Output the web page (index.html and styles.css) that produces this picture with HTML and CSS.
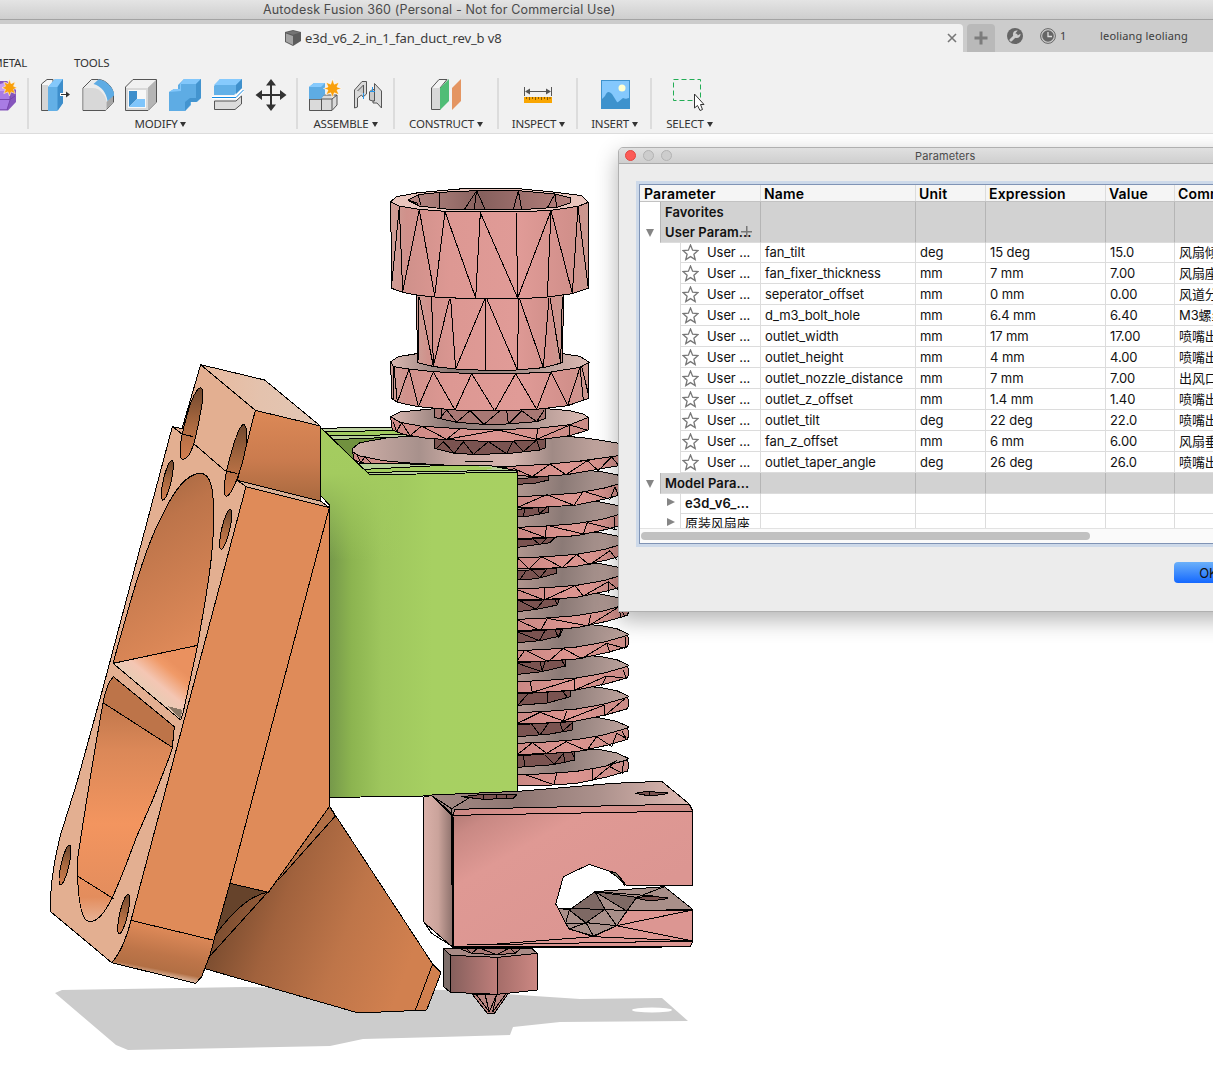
FILE: index.html
```
<!DOCTYPE html>
<html lang="en">
<head>
<meta charset="utf-8">
<title>Autodesk Fusion 360</title>
<link rel="stylesheet" href="styles.css">
</head>
<body>
<header class="titlebar"><span class="titlebar-text">Autodesk Fusion 360 (Personal - Not for Commercial Use)</span></header>

<nav class="tabstrip">
  <div class="tab">
    <svg class="cube" width="16" height="16" viewBox="0 0 16 16"><path d="M0 2 8 0l8 2v9l-8 5-8-4z" fill="#5c5c5c"/><path d="M1 3.500 8 6v9l-7-3.500z" fill="#a4a4a4"/><path d="M1 2.500 8 1l7 1.500-7 2.300z" fill="#747474"/></svg>
    <span class="tab-name">e3d_v6_2_in_1_fan_duct_rev_b v8</span>
    <svg class="tab-close" width="10" height="10" viewBox="0 0 10 10"><path d="M1 1 9 9M9 1 1 9" stroke="#777" stroke-width="1.600"/></svg>
  </div>
  <div class="newtab"><svg width="14" height="14" viewBox="0 0 14 14"><path d="M7 0.500V13.500M0.500 7H13.500" stroke="#7c7c7c" stroke-width="3"/></svg></div>
  <svg class="wrench" width="16" height="16" viewBox="0 0 16 16"><circle cx="8" cy="8" r="8" fill="#666"/><path d="M4 12 9 7" stroke="#ccc" stroke-width="3" stroke-linecap="round"/><path d="M10.800 2.600A3.800 3.800 0 1 0 13.500 5.800L11 7.300 8.900 7 8.600 5z" fill="#ccc"/></svg>
  <svg class="clock" width="16" height="16" viewBox="0 0 16 16"><circle cx="8" cy="8" r="7.400" fill="none" stroke="#666"/><circle cx="8" cy="8" r="5.800" fill="#666"/><path d="M8 4V8.500H12" fill="none" stroke="#ddd" stroke-width="1.300"/></svg>
  <span class="jobs">1</span>
  <span class="user">leoliang leoliang</span>
</nav>

<section class="ribbon">
  <div class="ribbon-tabs"><span class="rt-metal">METAL</span><span class="rt-tools">TOOLS</span></div>
  <div class="groups">
    <div class="group g-create">
      <div class="icons"><svg width="18" height="34" viewBox="0 78 18 34"><path d="M0 81H7L16 90V102L8 110.500H0z" fill="#8656bd"/><path d="M0 84 7 82 11 90 0 92z" fill="#c79df2"/><path d="M0 91H10V100L7 109H0z" fill="#a97ce4"/><path d="M0 99.500H10L15 96M10 91V100L7 110" stroke="#7745ad" fill="none"/><path d="M9.500 79.500l1.500 4.200 4.200-1.700-1.700 4.200 3.500 1.600-3.500 1.600 1.700 4.200-4.200-1.700-1.500 4.200-1.500-4.200-4.200 1.700 1.700-4.200-3.500-1.600 3.500-1.600-1.700-4.200 4.200 1.700z" fill="#f9a00c" stroke="#fff3dd" stroke-width=".6"/></svg></div>
    </div>
    <div class="group g-modify">
      <div class="icons">
        <svg width="32" height="34" viewBox="39 78 32 34"><path d="M41.500 84 47 79.500H53V110.500H41.500z" fill="#f5f5f5" stroke="#555"/><path d="M42 85H48V110H42z" fill="#d5d5d5"/><path d="M48 87 55 79H63V103L57 111H48z" fill="#63b0e6"/><path d="M48 87 55 79H63L57.500 87z" fill="#84c8fb"/><path d="M57.500 87 63 79V103L57.500 111z" fill="#3d8ecb"/><path d="M60 94.500H68" stroke="#fff" stroke-width="3"/><path d="M61 94.500H67" stroke="#333"/><path d="M66 91.500 70 94.500 66 97.500z" fill="#333"/></svg>
        <svg width="32" height="34" viewBox="82.500 78 32 34"><path d="M83.500 88 92 79.500H99C107 80 114 88 114 95V102L106 110.500H83.500z" fill="#ececec" stroke="#555"/><path d="M84 88H93C101 88 106 96 107 101V110H84z" fill="#d8d8d8"/><path d="M107 102 113.500 95V102L107 109z" fill="#a6a6a6"/><path d="M94 84 99 79.500C107 80 114 88 115 95L108 101C107 93 102 86 94 84z" fill="#5eace4"/></svg>
        <svg width="32" height="34" viewBox="126 78 32 34"><path d="M126.500 87 134 79.500H157.500V102L149 110.500H126.500z" fill="#f1f1f1" stroke="#555"/><path d="M149 87.500 157 80V102L149 110z" fill="#b5b5b5"/><path d="M127 88H149V110H127z" fill="#d9d9d9"/><path d="M129 90H147V108H129z" fill="#f8f8f8"/><path d="M130 91H138V99L130 107z" fill="#3d8ecb"/><path d="M130 107 138 99H146V107z" fill="#7fc5fb"/></svg>
        <svg width="32" height="34" viewBox="169 78 32 34"><path d="M169 92 174 89H178V85L184 79H201V98L197 102H191V105L185 111H169z" fill="#5eace4"/><path d="M169 92 174 89H180V84L184 79H201L196 84H181V91z" fill="#82c7fb"/><path d="M196 84 201 79V98L196 102H190V105L185 111V102L190 98H196z" fill="#4394cf"/></svg>
        <svg width="32" height="34" viewBox="212 78 32 34"><path d="M214 86 220 79H242V88L234 95H214z" fill="#62b0e7"/><path d="M214 85 220 79H242L236 85z" fill="#86cafd"/><path d="M236 85 242 79V88L236 94z" fill="#3f90cc"/><path d="M214.500 101H236L241.500 96V104L235 109.500H214.500z" fill="#dcdcdc" stroke="#555"/><path d="M212 97.500H236L243 90" fill="none" stroke="#fff" stroke-width="3.500"/><path d="M212 97.500H236L243.500 90" fill="none" stroke="#1689e0"/></svg>
        <svg width="32" height="34" viewBox="255 78 32 34"><path d="M271 82V108M259 95H284" stroke="#333" stroke-width="2"/><path d="M271 79l5 6.500H266zM271 111l5-6.500H266zM255.500 95l6.500-5V100zM286.500 95l-6.500-5V100z" fill="#333"/></svg>
      </div>
      <div class="label">MODIFY<i></i></div>
    </div>
    <div class="group g-assemble">
      <div class="icons">
        <svg width="34" height="34" viewBox="308 78 34 34"><path d="M309.500 99H321V97L324 95H337V105L332 110.500H309.500z" fill="#dadada" stroke="#555"/><path d="M309.500 99H332L337 95M321.500 99V110M332 99V110" fill="none" stroke="#555"/><path d="M309 87 314 83H325V94L321 99H309z" fill="#5eace4"/><path d="M309 87 314 83H325L321 87z" fill="#86cafd"/><path d="M332.500 79l1.800 5.200 4.700-2-2 4.700 4.500 1.600-4.500 1.600 2 4.700-4.700-2-1.800 4.700-1.800-4.700-4.700 2 2-4.700-4.500-1.600 4.500-1.600-2-4.700 4.700 2z" fill="#f9a00c" stroke="#fff" stroke-width=".6"/></svg>
        <svg width="32" height="34" viewBox="352 78 32 34"><path d="M354.500 90 362 81.500H366.500V94L363 97 361.500 95 357.500 98V107L354.500 108z" fill="#d9d9d9" stroke="#555"/><path d="M357.500 91 363.500 85V94M369.500 92 372 89.500H374.500V101.500L369.500 100z" fill="#c9c9c9" stroke="#555"/><path d="M374.500 83.500 381.500 91V108L377 103H373V101H374.500z" fill="#d9d9d9" stroke="#555"/><path d="M363.500 93V99M372.500 87V92M370 91.500H375" stroke="#2694e8"/></svg>
      </div>
      <div class="label">ASSEMBLE<i></i></div>
    </div>
    <div class="group g-construct">
      <div class="icons"><svg width="32" height="34" viewBox="431 78 32 34"><path d="M432.500 88 440 79.500H448L441 88V109.500H432.500z" fill="#f4f4f4" stroke="#555"/><path d="M433 88H441V109H433z" fill="#d8d8d8"/><path d="M441 88 450 79V101L441 110z" fill="#50bd76"/><path d="M453 88 462 79V101L453 110z" fill="#e49562"/></svg></div>
      <div class="label">CONSTRUCT<i></i></div>
    </div>
    <div class="group g-inspect">
      <div class="icons"><svg width="32" height="34" viewBox="522 78 32 34"><path d="M524.500 87V96M551.500 87V96M527 91.500H549" stroke="#555" fill="none"/><path d="M525 91.500 530 88.500V94.500zM551 91.500 546 88.500V94.500z" fill="#555"/><path d="M524 97H552V103H524z" fill="#f9a602"/><path d="M526.500 97V99M529.500 97V100M532.500 97V99M535.500 97V100M538.500 97V99M541.500 97V100M544.500 97V99M547.500 97V100M550 97V99" stroke="#8b5c00"/></svg></div>
      <div class="label">INSPECT<i></i></div>
    </div>
    <div class="group g-insert">
      <div class="icons"><svg width="32" height="34" viewBox="598 78 32 34"><path d="M600 80H629V109H600z" fill="#3e92cd"/><path d="M601 81H628V98C625 99 624 99 622 98C619 100 617 103 616 102L611 94C608 91 606 91 604 96L601 99z" fill="#84c8fd"/><circle cx="621" cy="88" r="3.500" fill="#ffffd2"/></svg></div>
      <div class="label">INSERT<i></i></div>
    </div>
    <div class="group g-select">
      <div class="icons"><svg width="34" height="34" viewBox="673 78 34 34"><path d="M673.500 79.500H700.500V100.500H673.500z" fill="none" stroke="#22ad55" stroke-dasharray="5 3"/><path d="M694.500 94V108L697.500 105.500 700 110.500 702.500 109.500 700.500 104.500H704z" fill="#fff" stroke="#333"/></svg></div>
      <div class="label">SELECT<i></i></div>
    </div>
  </div>
</section>

<main class="viewport">
<svg class="model" width="760" height="958" viewBox="0 134 760 958">
  <defs>
    <linearGradient id="green" x1="329" x2="517" y1="0" y2="0" gradientUnits="userSpaceOnUse"><stop offset="0" stop-color="#75984a"/><stop offset=".12" stop-color="#8cb450"/><stop offset=".28" stop-color="#9ec65d"/><stop offset=".55" stop-color="#a7d062"/><stop offset="1" stop-color="#a8d062"/></linearGradient>
    <linearGradient id="greenTop" x1="0" x2="0" y1="427" y2="560" gradientUnits="userSpaceOnUse"><stop offset="0" stop-color="#a5cd60"/><stop offset=".35" stop-color="#a3cb5f"/><stop offset="1" stop-color="#a3cb5f" stop-opacity="0"/></linearGradient>
    <linearGradient id="finTop" x1="53" x2="385" y1="-55" y2="-20" gradientUnits="userSpaceOnUse"><stop offset="0" stop-color="#b2968f"/><stop offset=".4" stop-color="#8b7a76"/><stop offset=".7" stop-color="#a48f8a"/><stop offset="1" stop-color="#bfa49e"/></linearGradient>
    <linearGradient id="band" x1="0" x2="1"><stop offset="0" stop-color="#cb8884"/><stop offset=".5" stop-color="#dc9590"/><stop offset="1" stop-color="#c98b86"/></linearGradient>
    <linearGradient id="cyl" x1="0" x2="1"><stop offset="0" stop-color="#ce9e96"/><stop offset=".08" stop-color="#d0918b"/><stop offset=".3" stop-color="#dd9893"/><stop offset=".65" stop-color="#e09b97"/><stop offset=".9" stop-color="#d2908b"/><stop offset="1" stop-color="#c9988f"/></linearGradient>
    <linearGradient id="cupIn" x1="0" x2="1"><stop offset="0" stop-color="#b98984"/><stop offset=".45" stop-color="#86605d"/><stop offset="1" stop-color="#b5807c"/></linearGradient>
    <linearGradient id="disc" x1="0" x2="1"><stop offset="0" stop-color="#d9b7b0"/><stop offset=".3" stop-color="#8a7773"/><stop offset=".65" stop-color="#a78f8a"/><stop offset="1" stop-color="#dcbbb4"/></linearGradient>
    <linearGradient id="bigDisc" x1="0" x2="1"><stop offset="0" stop-color="#cfafa8"/><stop offset=".25" stop-color="#a8918c"/><stop offset=".38" stop-color="#c7a8a1"/><stop offset=".6" stop-color="#d6b5ae"/><stop offset=".75" stop-color="#a08a85"/><stop offset="1" stop-color="#cdaea7"/></linearGradient>
    <linearGradient id="duct" x1="0" x2=".25" y1="0" y2="1"><stop offset="0" stop-color="#98603d"/><stop offset=".3" stop-color="#bd744a"/><stop offset=".75" stop-color="#d98656"/><stop offset="1" stop-color="#ea9260"/></linearGradient>
    <linearGradient id="duct2" x1="0" x2="0" y1="0" y2="1"><stop offset="0" stop-color="#b16d44"/><stop offset=".3" stop-color="#db8858"/><stop offset=".6" stop-color="#f3955f"/><stop offset=".9" stop-color="#e38d5d"/><stop offset="1" stop-color="#e8b296"/></linearGradient>
    <linearGradient id="shelf" x1="350" x2="425" y1="95" y2="5" gradientUnits="userSpaceOnUse"><stop offset="0" stop-color="#e8cbb4"/><stop offset=".35" stop-color="#f4c6b3"/><stop offset=".8" stop-color="#f09a68"/><stop offset="1" stop-color="#ea915f"/></linearGradient>
    <linearGradient id="hole" x1="0" x2="0" y1="0" y2="1"><stop offset="0" stop-color="#6f472e"/><stop offset=".5" stop-color="#a8683f"/><stop offset="1" stop-color="#d27e50"/></linearGradient>
    <linearGradient id="boxside" x1="0" x2="0" y1="0" y2="1"><stop offset="0" stop-color="#dc8957"/><stop offset=".55" stop-color="#ca7b4e"/><stop offset="1" stop-color="#a8693f"/></linearGradient>
    <linearGradient id="foot" x1="420" x2="394" y1="1740" y2="1876" gradientUnits="userSpaceOnUse"><stop offset="0" stop-color="#dd8958"/><stop offset=".55" stop-color="#be7549"/><stop offset=".88" stop-color="#b26f44"/><stop offset="1" stop-color="#d8b096"/></linearGradient>
    <linearGradient id="funnel" x1="540" x2="1100" y1="800" y2="1010" gradientUnits="userSpaceOnUse"><stop offset="0" stop-color="#764a2e"/><stop offset=".3" stop-color="#a1623d"/><stop offset=".65" stop-color="#be7549"/><stop offset="1" stop-color="#d1804f"/></linearGradient>
    <linearGradient id="blockL" x1="0" x2="1"><stop offset="0" stop-color="#dab1a9"/><stop offset=".5" stop-color="#caa39b"/><stop offset="1" stop-color="#8d716c"/></linearGradient>
    <linearGradient id="blockT" x1="0" x2="1"><stop offset="0" stop-color="#a58b86"/><stop offset=".35" stop-color="#8f7773"/><stop offset=".65" stop-color="#ac918c"/><stop offset="1" stop-color="#dfbab3"/></linearGradient>
    <linearGradient id="blockF" x1="0" x2=".7" y1="0" y2=".7"><stop offset="0" stop-color="#b07873"/><stop offset=".14" stop-color="#c98984"/><stop offset=".4" stop-color="#df9994"/><stop offset="1" stop-color="#dc9692"/></linearGradient>
    <linearGradient id="hexL" x1="0" x2="1"><stop offset="0" stop-color="#865f5c"/><stop offset="1" stop-color="#c07f7b"/></linearGradient>
    <linearGradient id="hexR" x1="0" x2="1"><stop offset="0" stop-color="#a56d69"/><stop offset="1" stop-color="#cc8883"/></linearGradient>
    <linearGradient id="lid" x1="0" x2="1"><stop offset="0" stop-color="#e8b99d"/><stop offset=".5" stop-color="#e4c2ad"/><stop offset="1" stop-color="#e2c6b4"/></linearGradient>
    <g id="fin">
      <path fill="url(#finTop)" d="M53 0 140-4 230-11 310-25 383-45 385-50 350-66 300-76 53-90z"/>
      <path fill="url(#band)" d="M53 0 140-4 230-11 310-25 383-46 386-28 383-12 320 6 230 25 140 31 53 33z"/>
    </g>
  </defs>

  <g class="shadow">
    <path d="M62 990 245 987 445 990 580 999 662 998 688 1021 560 1022 513 1027 510 1035 440 1037 363 1039 330 1046 128 1050 116 1045 55 993z"/>
    <ellipse class="shadow-hole" cx="652" cy="1010" rx="20" ry="2.500"/>
  </g>

  <!-- heat sink fins, lowest first so each rim covers the disc beneath -->
  <g class="edges" transform="translate(500 430) scale(.33333)">
    <use href="#fin" y="1035"/><path class="hub" d="M53 978 225 965V990L160 1004 53 1012z"/><path d="M70 978 75 1010M135 975 163 1003 190 970 195 996M215 967 225 985M75 1034 162 1064 170 1028M277 1017V1052L350 992 322 1006 368 1030 370 990"/>
    <use href="#fin" y="940"/><path class="hub" d="M53 884 217 875V900L150 912 53 920z"/><path d="M95 882 120 915 145 880M180 878 188 903 215 880M53 973 97 938 140 970 198 935 260 962 290 920 335 950 350 910 378 925 365 902"/>
    <use href="#fin" y="848"/><path class="hub" d="M53 792 211 782V800L142 819 53 826z"/><path d="M55 824 85 790M142 787V819M188 785 205 805M53 880 120 847 190 873 200 842M190 873 313 825V858L375 806"/>
    <use href="#fin" y="755"/><path class="hub" d="M53 699 197 688V708L125 725 53 733z"/><path d="M53 700 125 725 135 695M120 697 127 724M185 690 195 708M90 755 97 787 225 747V780L320 738 305 768M320 738 378 745 370 720"/>
    <use href="#fin" y="662"/><path class="hub" d="M53 606 188 597 180 618 120 632 53 638z"/><path d="M53 606 118 632 135 602M165 600 175 622 183 600M53 690 75 660 145 695 190 655 245 686 320 640 375 655 378 620M320 640 330 668"/>
    <use href="#fin" y="568"/><path class="hub" d="M53 513 178 508 172 525 110 538 53 545z"/><path d="M60 512 108 538 132 510M165 508 172 525M53 570 122 602 142 565 265 588 272 555 M265 588 358 530 375 560M358 530 362 565"/>
    <use href="#fin" y="477"/><path class="hub" d="M53 422 170 415V430L110 446 53 450z"/><path d="M60 448 80 420M95 420 120 443 140 418M55 480 133 510 135 473M133 510 225 467 250 498 325 455V490M325 455 356 480"/>
    <use href="#fin" y="384"/><path class="hub" d="M53 330 165 322 150 338 53 352z"/><path d="M100 328 120 344 140 326M53 384 87 417 125 380 187 413 230 373 268 405 330 362 350 390"/>
    <use href="#fin" y="292"/><path class="hub" d="M53 238 146 230V247L75 260 53 260z"/><path d="M70 258 75 237 90 236M115 234 118 252 140 232M53 292 135 322 140 287M145 287 250 312 262 278 350 300M345 262V298"/>
    <use href="#fin" y="200"/><path class="hub" d="M53 147 146 138V150L105 160 53 163z"/><path d="M53 232 140 194 222 226 250 184 330 208 345 170 356 200"/>
    <path d="M0 120V95L100 103 260 92 356 73 400 70V90L356 107 200 134 100 141 53 135z" fill="url(#band)"/>
    <path d="M40 115 97 140 150 102 198 134 262 92 295 122 335 80 356 107"/>
  </g>

  <!-- rear plate of the bracket, seen behind the upper disc -->
  <g class="edges" transform="translate(310 410) scale(.33333)">
    <path fill="#71913f" d="M60 80H290V110L130 155z"/>
    <path fill="#bfd3a3" d="M35 55 175 52H290V70L45 66z"/>
    <path fill="#a2cb60" d="M45 65 290 61V76L60 78z"/>
    <path fill="#b7cd97" d="M60 77 290 74V80L70 89z"/>
  </g>

  <!-- coupling, collars and upper discs -->
  <g class="edges" transform="translate(340 170) scale(.33333)">
    <path fill="url(#band)" d="M38 835 40 868 60 878 130 884 340 890 500 892 500 870z"/>
    <path fill="url(#bigDisc)" d="M38 835 60 818 150 802 290 796 620 796 720 802 790 812 836 820V857L720 873 620 883 510 889 330 886 220 880 130 872 60 858 38 846z"/>
    <path d="M50 852 62 878 75 860 95 882M375 874H460"/>
    <path class="hub" d="M283 800V835L343 850 400 853 500 851 600 840 617 833V800z"/>
    <path d="M290 835 310 815 343 850 370 815 400 853 445 815 500 851 520 812 550 845 590 810 600 840"/>
    <path fill="url(#band)" d="M152 742 157 780 190 793 260 805 380 812 480 815 590 810 690 797 745 780V742z"/>
    <path fill="url(#disc)" d="M152 740 180 726 283 716H617L690 722 730 732 745 742 690 764 590 775 440 780 340 775 240 768 180 757z"/>
    <path d="M160 755 170 785 185 758 210 797 245 768 320 808 360 776M320 808 475 780 590 808 592 775M590 808 690 765V797M690 765 740 780"/>
    <path class="hub mid" d="M283 712V742L350 757 430 763 500 762 590 755 617 745V712z"/>
    <path d="M300 745 320 720 350 757 390 722 432 763 480 722M500 722 505 762 545 722 590 755 612 722M305 718V748"/>
    <path fill="url(#cyl)" d="M152 575 155 685 172 697 235 710 345 720 464 723 590 718 683 707 747 685V577z"/>
    <path fill="url(#disc)" d="M152 575 175 560 230 551H668L720 559 748 577 720 592 633 606 527 611H395L280 605 207 597 160 590z"/>
    <path d="M160 590V688M162 592 172 697 207 597 235 710 280 606 345 720 395 611 464 723 527 611 590 718 633 606 683 707 720 592 730 690M725 590 747 680"/>
    <path fill="url(#cyl)" d="M230 372 232 578 283 590 347 597 436 601 532 600 610 593 668 578 670 372z"/>
    <path d="M238 380 280 588M275 382 280 588 328 388M332 388 347 597 434 388M437 388V600M441 388 532 600 536 388M539 388 610 592 627 384M630 384 662 578M667 380 662 578M235 380V570"/>
    <path fill="url(#cyl)" d="M152 95 155 355 188 367 235 376 284 381 407 387H533L622 381 697 371 745 355V97z"/>
    <path fill="#e9c5bd" d="M152 95 170 80 235 68 370 56H535L640 66 725 77 745 97 714 109 633 121 529 126H421L315 124 238 118 178 108z"/>
    <path fill="url(#cupIn)" d="M203 90 235 74 300 67 410 62H535L645 72 693 84V98L650 112 529 120H421L315 117 238 108z"/>
    <path d="M300 67V116M410 62 372 120M410 62 402 120M410 62 436 120M535 62 520 118M535 62 545 118M645 72 622 113M645 72 650 110M235 74 242 105M203 90 235 100"/>
    <path d="M178 110 155 345M178 110 188 365 238 120 284 378 315 125 407 384 421 128 533 384 529 128M533 384 633 122 622 380M633 122 697 370 714 112 745 355"/>
  </g>

  <!-- green bracket -->
  <g class="edges">
    <g transform="translate(310 410) scale(.33333)">
      <path fill="#b8cf98" d="M145 160 300 162 420 167 545 168 620 182 620 188 180 196z"/>
      <path fill="#a5ce61" stroke="none" d="M163 178 400 168 540 170 550 178 175 188z"/>
      <path d="M163 178 400 166M172 187 620 181"/>
    </g>
    <path fill="url(#green)" d="M320 427 370 475 440 473.500 517.500 472V794.500L329.500 797.500V505L320 495z"/>
    <path fill="url(#greenTop)" stroke="none" d="M321 429 370 476 400 476V560H330V505L321 495z"/>
  </g>

  <!-- heater block and nozzle -->
  <g class="edges" transform="translate(400 760) scale(.33333)">
    <path fill="url(#blockT)" d="M72 110 95 105 355 94 640 70 785 64 868 132 878 152 700 160 155 168z"/>
    <path fill="url(#band)" d="M165 148 868 132 878 153 158 166z"/>
    <path class="hub" d="M185 110 240 104H350L340 115 250 118zM705 100 740 94 803 99 790 104 745 107z"/>
    <path d="M250 104V117M290 104V117M320 104V117M750 95V106M95 107 155 146 210 112M155 146V165"/>
    <path fill="url(#blockL)" d="M72 110 95 107 155 160 158 562 72 487z"/>
    <path d="M72 487 95 520 158 560M95 107 155 165"/>
    <path fill="#a88f89" d="M475 445 508 450 585 395 793 380 878 448 680 453 650 497 580 528 508 507 497 490z"/>
    <path fill="#7e6964" d="M585 395 615 448 558 488 508 450zM585 395 710 412 680 453z"/>
    <path class="hub" d="M705 414 750 408 803 414 790 419 745 422z"/>
    <path fill="url(#blockF)" fill-rule="evenodd" d="M158 166 878 153V377L680 378 655 345 625 332 568 313 490 350 467 432 475 445 497 490 508 507 580 530 650 497 680 453 878 450V545L870 560 162 562z"/>
    <path fill="#7d7c6b" d="M625 332 650 340 675 376 650 350z"/>
    <path d="M475 445 615 448 680 453M508 450 497 490H558L508 450M558 488 615 448 650 497 558 488 580 528M585 395 615 448M585 395 680 453M558 488 508 507M585 395 710 412 650 497 878 450M650 497 878 543M580 530 878 543M200 555 878 543M580 530 290 552M585 395 760 408M793 380 710 412M162 170V556"/>
    <path class="thick" d="M157 166 158 560M158 562H785"/>
    <path fill="#a88a85" d="M130 565H395L412 580 293 592 152 586z"/>
    <path class="hub mid" d="M180 566H362L345 580 290 584 215 580z"/><path d="M200 566 215 580 235 563 290 584 330 563 345 580"/>
    <path fill="#7d6d69" d="M130 565 152 586V697L130 680z"/>
    <path fill="url(#hexL)" d="M152 586 293 592V703L152 697z"/>
    <path fill="url(#hexR)" d="M293 592 412 580V690L293 703z"/>
    <path fill="#b98580" d="M216 702 293 703 326 699 283 760H262z"/><path d="M228 702 268 756 255 703M268 756 290 703 278 756 318 701"/>
  </g>

  <!-- outlet funnel -->
  <g class="edges" transform="translate(30 660) scale(.33333)">
    <path fill="url(#funnel)" d="M898 438 1208 912 1233 938 1190 1050 985 1059 525 926 560 750 600 670 715 697z"/>
    <path fill="#66432b" stroke="none" d="M600 670 715 697C650 705 590 780 555 825z"/>
    <path fill="#b26f45" stroke="none" d="M898 438 916 468 740 665 715 697z"/>
    <path d="M715 697C650 705 590 780 555 825M710 700 540 888M898 438 916 468 745 660M1208 912 1155 1053"/>
  </g>

  <!-- fan housing -->
  <g class="edges" transform="translate(30 350) scale(.33333)">
    <path fill="#df8b59" d="M648 410 898 473 898 1370 715 1627 600 1600 552 1770 525 1856 245 1838z"/>
    <path fill="url(#boxside)" d="M676 181 871 228V453L622 391z"/>
    <path fill="url(#lid)" d="M512 44 704 90 871 228 676 181z"/>
    <path fill="#d9b197" d="M622 391 871 453 898 473 648 410z"/>
    <path fill="url(#foot)" d="M303 1711 552 1771 540 1815 515 1880 497 1900 245 1838 275 1790z"/>
    <path fill="#e3af91" d="M427 230 456 236 512 44 676 181 622 391 648 410 303 1711Q280 1800 245 1838L62 1685V1635Q66 1560 90 1460L140 1300 220 1010z"/>
    <path fill="url(#duct)" d="M249 940C310 720 350 580 400 490C440 405 480 370 512 370C550 372 552 440 550 530C549 640 520 780 503 886L452 1110Z"/>
    <path fill="url(#shelf)" transform="translate(0 930)" d="M249 10 503-44 460 155 452 180z"/>
    <path fill="#897765" stroke="none" d="M412 1068 457 1080 451 1107z"/>
    <path fill="url(#duct2)" d="M250 980Q230 1010 219 1060C190 1220 165 1380 142 1530Q142 1715 180 1715C230 1715 270 1590 320 1460Q380 1330 427 1195L433 1130z"/>
    <path fill="#bd7449" d="M250 980 433 1130 427 1192 219 1058Q230 1000 250 980z"/>
    <path d="M142 1578 252 1647M490 280 585 362M427 230 456 252M898 473 600 1600M503 886 250 940"/>
    <g fill="url(#hole)">
      <path d="M512 112Q523 120 515 170C503 230 490 330 457 328Q446 325 454 265C470 190 490 120 512 112z"/>
      <path d="M640 223Q656 228 648 290C635 360 605 440 588 439Q577 430 590 360C605 300 625 228 640 223z"/>
      <ellipse cx="412" cy="391" rx="12" ry="61" transform="rotate(13 412 391)"/>
      <ellipse cx="587" cy="538" rx="12" ry="61" transform="rotate(13 587 538)"/>
      <ellipse cx="105" cy="1545" rx="12" ry="61" transform="rotate(13 105 1545)"/>
      <ellipse cx="281" cy="1692" rx="12" ry="61" transform="rotate(13 281 1692)"/>
    </g>
    <path d="M456 252 490 260M585 362 622 371"/>
  </g>
</svg>

<section class="dialog">
  <div class="dialog-title"><b class="light close"></b><b class="light"></b><b class="light"></b><span>Parameters</span></div>
  <div class="panel">
    <div class="row head"><span>Parameter</span><span>Name</span><span>Unit</span><span>Expression</span><span>Value</span><span>Comment</span></div>
    <div class="rows">
      <div class="row section"><span>Favorites</span><span></span><span></span><span></span><span></span><span></span></div>
      <div class="row section open"><span>User Param...<em></em></span><span></span><span></span><span></span><span></span><span></span></div>
      <div class="row item"><span><svg class="star" viewBox="0 0 17 17"><path d="M8.500 1 10.600 6.200 16 6.600 11.900 10.200 13.200 15.500 8.500 12.600 3.800 15.500 5.100 10.200 1 6.600 6.400 6.200z"/></svg>User ...</span><span>fan_tilt</span><span>deg</span><span>15 deg</span><span>15.0</span><span>风扇倾角</span></div>
      <div class="row item"><span><svg class="star" viewBox="0 0 17 17"><path d="M8.500 1 10.600 6.200 16 6.600 11.900 10.200 13.200 15.500 8.500 12.600 3.800 15.500 5.100 10.200 1 6.600 6.400 6.200z"/></svg>User ...</span><span>fan_fixer_thickness</span><span>mm</span><span>7 mm</span><span>7.00</span><span>风扇座厚度</span></div>
      <div class="row item"><span><svg class="star" viewBox="0 0 17 17"><path d="M8.500 1 10.600 6.200 16 6.600 11.900 10.200 13.200 15.500 8.500 12.600 3.800 15.500 5.100 10.200 1 6.600 6.400 6.200z"/></svg>User ...</span><span>seperator_offset</span><span>mm</span><span>0 mm</span><span>0.00</span><span>风道分隔</span></div>
      <div class="row item"><span><svg class="star" viewBox="0 0 17 17"><path d="M8.500 1 10.600 6.200 16 6.600 11.900 10.200 13.200 15.500 8.500 12.600 3.800 15.500 5.100 10.200 1 6.600 6.400 6.200z"/></svg>User ...</span><span>d_m3_bolt_hole</span><span>mm</span><span>6.4 mm</span><span>6.40</span><span>M3螺丝孔</span></div>
      <div class="row item"><span><svg class="star" viewBox="0 0 17 17"><path d="M8.500 1 10.600 6.200 16 6.600 11.900 10.200 13.200 15.500 8.500 12.600 3.800 15.500 5.100 10.200 1 6.600 6.400 6.200z"/></svg>User ...</span><span>outlet_width</span><span>mm</span><span>17 mm</span><span>17.00</span><span>喷嘴出口宽</span></div>
      <div class="row item"><span><svg class="star" viewBox="0 0 17 17"><path d="M8.500 1 10.600 6.200 16 6.600 11.900 10.200 13.200 15.500 8.500 12.600 3.800 15.500 5.100 10.200 1 6.600 6.400 6.200z"/></svg>User ...</span><span>outlet_height</span><span>mm</span><span>4 mm</span><span>4.00</span><span>喷嘴出口高</span></div>
      <div class="row item"><span><svg class="star" viewBox="0 0 17 17"><path d="M8.500 1 10.600 6.200 16 6.600 11.900 10.200 13.200 15.500 8.500 12.600 3.800 15.500 5.100 10.200 1 6.600 6.400 6.200z"/></svg>User ...</span><span>outlet_nozzle_distance</span><span>mm</span><span>7 mm</span><span>7.00</span><span>出风口距离</span></div>
      <div class="row item"><span><svg class="star" viewBox="0 0 17 17"><path d="M8.500 1 10.600 6.200 16 6.600 11.900 10.200 13.200 15.500 8.500 12.600 3.800 15.500 5.100 10.200 1 6.600 6.400 6.200z"/></svg>User ...</span><span>outlet_z_offset</span><span>mm</span><span>1.4 mm</span><span>1.40</span><span>喷嘴出口偏移</span></div>
      <div class="row item"><span><svg class="star" viewBox="0 0 17 17"><path d="M8.500 1 10.600 6.200 16 6.600 11.900 10.200 13.200 15.500 8.500 12.600 3.800 15.500 5.100 10.200 1 6.600 6.400 6.200z"/></svg>User ...</span><span>outlet_tilt</span><span>deg</span><span>22 deg</span><span>22.0</span><span>喷嘴出口倾角</span></div>
      <div class="row item"><span><svg class="star" viewBox="0 0 17 17"><path d="M8.500 1 10.600 6.200 16 6.600 11.900 10.200 13.200 15.500 8.500 12.600 3.800 15.500 5.100 10.200 1 6.600 6.400 6.200z"/></svg>User ...</span><span>fan_z_offset</span><span>mm</span><span>6 mm</span><span>6.00</span><span>风扇垂直偏移</span></div>
      <div class="row item"><span><svg class="star" viewBox="0 0 17 17"><path d="M8.500 1 10.600 6.200 16 6.600 11.900 10.200 13.200 15.500 8.500 12.600 3.800 15.500 5.100 10.200 1 6.600 6.400 6.200z"/></svg>User ...</span><span>outlet_taper_angle</span><span>deg</span><span>26 deg</span><span>26.0</span><span>喷嘴出口锥角</span></div>
      <div class="row section open"><span>Model Para...</span><span></span><span></span><span></span><span></span><span></span></div>
      <div class="row node strong"><span>e3d_v6_...</span><span></span><span></span><span></span><span></span><span></span></div>
      <div class="row node"><span>原装风扇座</span><span></span><span></span><span></span><span></span><span></span></div>
    </div>
    <div class="scroll"><div class="thumb"></div></div>
  </div>
  <div class="actions"><button class="ok">OK</button></div>
</section>
</main>
</body>
</html>
```

FILE: styles.css
```
* { box-sizing: border-box; }
body { margin: 0; width: 1213px; height: 1092px; overflow: hidden; display: flex; flex-direction: column; background: #fff; font-family: Inter, "Noto Sans CJK SC", sans-serif; color: #111; }
svg { display: block; flex: none; }

.titlebar { height: 20px; flex: none; background: linear-gradient(#e4e4e4, #cecece); border-bottom: 1px solid #a3a3a3; padding-left: 263px; line-height: 19px; font-size: 12.5px; letter-spacing: .16px; color: #4a4a4a; white-space: nowrap; }

.tabstrip { height: 32px; flex: none; display: flex; align-items: flex-start; background: #ccc; padding-top: 4px; font-family: "Noto Sans", sans-serif; color: #3c3c3c; }
.tab { width: 963px; height: 28px; background: #f1f1f1; border-radius: 0 4px 0 0; display: flex; align-items: center; padding: 0 6px 0 285px; }
.tab-name { margin-left: 4px; font-size: 13px; letter-spacing: -.12px; white-space: nowrap; }
.cube { margin-bottom: 1px; }
.tab-close { margin-left: auto; }
.newtab { width: 28px; height: 28px; margin-left: 4px; background: #b9b9b9; border-radius: 4px 4px 0 0; display: flex; align-items: center; justify-content: center; }
.wrench { margin: 4px 0 0 12px; }
.clock { margin: 4px 0 0 17px; }
.jobs { margin: 4px 0 0 4px; font-size: 11px; line-height: 16px; width: 7px; }
.user { margin: 4px 0 0 33px; font-size: 11px; line-height: 16px; letter-spacing: .17px; white-space: nowrap; }

.ribbon { height: 82px; flex: none; background: #f1f1f1; border-bottom: 1px solid #dcdcdc; font-family: "Noto Sans", sans-serif; font-size: 11.5px; letter-spacing: -.2px; color: #333; }
.ribbon-tabs { height: 26px; display: flex; line-height: 22px; }
.rt-metal { width: 27px; display: flex; justify-content: flex-end; }
.rt-tools { margin-left: 47px; }
.groups { display: flex; height: 51px; }
.group { display: flex; flex-direction: column; align-items: center; border-right: 2px solid #dcdcdc; }
.icons { display: flex; height: 34px; width: 100%; justify-content: center; }
.label { height: 22px; margin-top: 1px; flex: none; line-height: 22px; display: flex; align-items: center; white-space: nowrap; }
.label i { border: 3.5px solid transparent; border-top: 5px solid #333; border-bottom: 0; margin-left: 3px; }
.g-create { width: 29px; } .g-create .icons { justify-content: flex-start; }
.g-modify { width: 269px; padding-right: 4px; } .g-modify .icons { justify-content: flex-start; gap: 11.2px; padding-left: 10px; }
.g-assemble { width: 97px; } .g-assemble .icons { gap: 10px; justify-content: flex-start; padding-left: 10px; }
.g-construct { width: 104px; }
.g-inspect { width: 79px; padding-left: 2px; } .g-inspect .icons { padding-right: 2px; }
.g-insert { width: 74px; padding-left: 1px; }
.g-select { width: 75px; border: 0; }

.viewport { position: relative; flex: 1; background: #fff; overflow: hidden; }
.shadow { fill: #ccc; }
.shadow-hole { fill: #fff; }
.edges { stroke: #000; fill: none; shape-rendering: crispEdges; stroke-linejoin: round; }
.edges path, .edges ellipse, #fin path { vector-effect: non-scaling-stroke; stroke-width: 1px; }
.edges .thick { stroke-width: 2px; }
.edges .hub { fill: #7a5350; }
.edges .mid { fill: #a87874; }

.dialog { position: absolute; left: 618px; top: 13px; width: 680px; height: 465px; background: #ececec; border: 1px solid #b0b0b0; border-radius: 5px 0 0 0; box-shadow: 0 8px 22px rgba(0,0,0,.3); display: flex; flex-direction: column; }
.dialog-title { height: 16px; flex: none; display: flex; align-items: center; gap: 7px; padding-left: 6px; background: linear-gradient(#e0e0e0, #cfcfcf); border-bottom: 1px solid #aaa; border-radius: 4px 0 0 0; font-size: 11px; letter-spacing: .1px; color: #4b4b4b; }
.dialog-title span { margin-left: 236px; }
.light { width: 11px; height: 11px; border-radius: 50%; background: #cdcdcd; border: 1px solid #b3b3b3; }
.light.close { background: #fc5b57; border-color: #e24640; }
.panel { margin: 20px 0 0 20px; height: 360px; flex: none; border: 1px solid #7f93b5; outline: 3px solid #cdd9e9; background: #fff; display: flex; flex-direction: column; overflow: hidden; }
.row { display: grid; grid-template-columns: 120px 155px 70px 120px 69px 1fr; font-size: 13px; letter-spacing: -.08px; white-space: nowrap; }
.row > span { border-left: 1px solid #dcdcdc; padding-left: 4px; border-bottom: 1px solid #dcdcdc; overflow: hidden; }
.row > span:first-child { border-left-color: transparent; }
.head { height: 17px; flex: none; font-size: 14px; font-weight: 600; letter-spacing: .2px; color: #000; background: #f5f5f5; line-height: 17px; border-bottom: 1px solid #c2c2c2; }
.head > span { border-bottom: 0; padding-left: 3px; }
.rows { height: 326px; flex: none; overflow: hidden; }
.section { height: 20px; line-height: 20px; font-weight: 600; letter-spacing: .1px; }
.section > span { background: #d2d2d2; border-color: #b5b5b5; position: relative; }
.section > span:first-child { margin-left: 20px; border-left-color: #b5b5b5; overflow: visible; }
.section.open > span { border-bottom-color: #dcdcdc; }
.section.open > span:first-child::before, .node > span:first-child::before { content: ""; position: absolute; left: -15px; top: 7px; border: 4.5px solid transparent; border-top: 8px solid #858585; border-bottom: 0; }
.section em { position: absolute; left: 80px; top: 4px; width: 11px; height: 11px; background: linear-gradient(#777, #777) 50% 50% / 11px 1.5px no-repeat, linear-gradient(#777, #777) 50% 50% / 1.5px 11px no-repeat; }
.item { height: 21px; line-height: 21px; }
.item > span:first-child { margin-left: 40px; border-left-color: #dcdcdc; padding-left: 1px; display: flex; align-items: center; }
.star { width: 17px; height: 17px; margin-right: 8px; fill: none; stroke: #777; stroke-width: 1.3px; }
.node { height: 20px; line-height: 20px; }
.node > span:first-child { margin-left: 40px; border-left-color: #dcdcdc; position: relative; overflow: visible; }
.node > span:first-child::before { left: -14px; top: 5px; border: 4.5px solid transparent; border-left: 8px solid #858585; border-right: 0; }
.strong { font-weight: 600; letter-spacing: .1px; }
.scroll { height: 15px; background: #fafafa; border-top: 1px solid #e2e2e2; padding: 3px 0 0 1px; }
.thumb { width: 449px; height: 8px; border-radius: 4px; background: #c1c1c1; }
.actions { padding: 18px 0 0 555px; }
.ok { display: block; width: 69px; height: 21px; border: 0; border-radius: 4px; background: linear-gradient(#6bb0f9, #1468ff); font: 13px Inter, sans-serif; color: #111; padding: 0; }
```
